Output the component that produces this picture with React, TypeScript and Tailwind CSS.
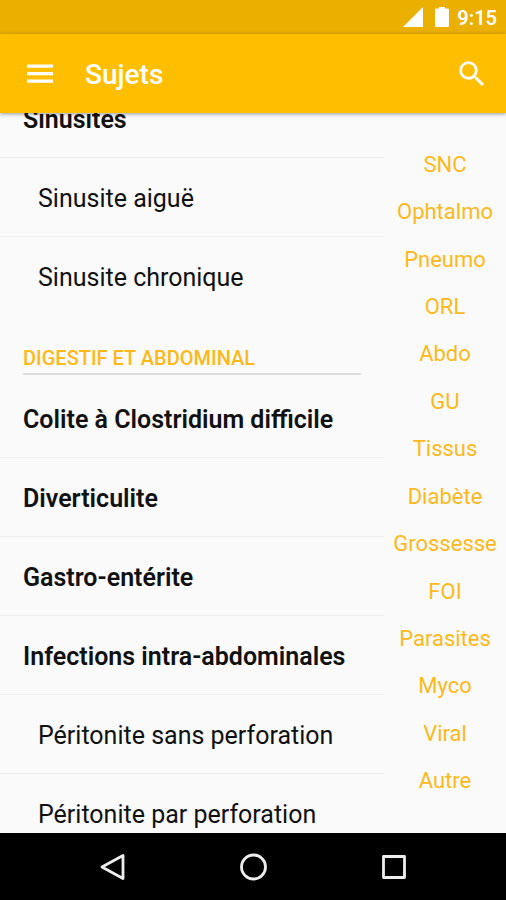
import React from "react";

type Topic = { label: string; child?: boolean; last?: boolean };

const sinusTopics: Topic[] = [
  { label: "Sinusites" },
  { label: "Sinusite aiguë", child: true },
  { label: "Sinusite chronique", child: true, last: true },
];

const digestiveTopics: Topic[] = [
  { label: "Colite à Clostridium difficile" },
  { label: "Diverticulite" },
  { label: "Gastro-entérite" },
  { label: "Infections intra-abdominales" },
  { label: "Péritonite sans perforation", child: true },
  { label: "Péritonite par perforation", child: true },
];

const sections = [
  "SNC", "Ophtalmo", "Pneumo", "ORL", "Abdo", "GU", "Tissus",
  "Diabète", "Grossesse", "FOI", "Parasites", "Myco", "Viral", "Autre",
];

function StatusBar() {
  return (
    <div className="flex h-[34px] shrink-0 items-center justify-end bg-[#ebaf00] pr-[9px] text-white">
      <svg className="h-5 w-5" viewBox="0 0 20 20" fill="currentColor" aria-hidden="true">
        <path d="M20 0v20H0z" />
      </svg>
      <svg className="ml-3 h-5 w-[14px]" viewBox="0 0 14 20" fill="currentColor" aria-hidden="true">
        <path d="M4 0h6v1.5h3a1 1 0 0 1 1 1V19a1 1 0 0 1-1 1H1a1 1 0 0 1-1-1V2.5a1 1 0 0 1 1-1h3z" />
      </svg>
      <span className="ml-2 pt-px text-xl leading-6 font-semibold">9:15</span>
    </div>
  );
}

function AppBar() {
  return (
    <header className="z-10 flex h-[79px] shrink-0 items-center bg-[#ffbf00] px-5 text-white shadow-[0_1px_4px_rgba(0,0,0,0.4)]">
      <button type="button" aria-label="Menu" className="flex h-10 w-10 items-center justify-center">
        <svg className="h-5 w-[26px]" viewBox="0 0 26 20" fill="currentColor">
          <path d="M0 .5h26v3.300H0zM0 8h26v3.300H0zM0 15.5h26v3.300H0z" />
        </svg>
      </button>
      <h1 className="ml-[25px] flex-1 pt-0.5 text-[28px] leading-8 font-medium">Sujets</h1>
      <button type="button" aria-label="Rechercher" className="-mr-1.5 flex h-10 w-10 items-center justify-center">
        <svg className="h-[34px] w-[34px]" viewBox="0 0 24 24" fill="currentColor">
          <path d="M15.5 14h-.79l-.28-.27A6.471 6.471 0 0 0 16 9.5 6.5 6.5 0 1 0 9.5 16c1.61 0 3.09-.59 4.23-1.57l.27.28v.79l5 4.99L20.49 19l-4.99-5zm-6 0C7.01 14 5 11.99 5 9.5S7.01 5 9.5 5 14 7.01 14 9.5 11.99 14 9.5 14z" />
        </svg>
      </button>
    </header>
  );
}

function TopicList({ topics }: { topics: Topic[] }) {
  return (
    <ul>
      {topics.map((t) => (
        <li
          key={t.label}
          className={
            t.last
              ? "h-[79px] border-b border-transparent"
              : "h-[79px] border-b border-[#eeeeee]"
          }
        >
          <a
            href="#"
            className={
              t.child
                ? "flex h-full items-center pt-1 pl-[38px] text-[25px] leading-8 whitespace-nowrap"
                : "flex h-full items-center pt-1 pl-[23px] text-[25px] leading-8 font-semibold whitespace-nowrap"
            }
          >
            {t.label}
          </a>
        </li>
      ))}
    </ul>
  );
}

function NavBar() {
  return (
    <nav className="flex h-[67px] shrink-0 items-center justify-center gap-[101px] bg-black text-[#eeeeee]">
      <button type="button" aria-label="Retour" className="flex h-10 w-10 items-center justify-center">
        <svg className="h-7 w-7" viewBox="0 0 28 28" fill="none" stroke="currentColor" strokeWidth="2.8" strokeLinejoin="round">
          <path d="M25 2.5v23L4 14z" />
        </svg>
      </button>
      <button type="button" aria-label="Accueil" className="flex h-10 w-10 items-center justify-center">
        <svg className="h-7 w-7" viewBox="0 0 28 28" fill="none" stroke="currentColor" strokeWidth="2.8">
          <circle cx="14.5" cy="14" r="12" />
        </svg>
      </button>
      <button type="button" aria-label="Applications récentes" className="flex h-10 w-10 items-center justify-center">
        <svg className="h-7 w-7" viewBox="0 0 28 28" fill="none" stroke="currentColor" strokeWidth="2.8" strokeLinejoin="round">
          <path d="M3.5 3.5h21v21h-21z" />
        </svg>
      </button>
    </nav>
  );
}

export default function App() {
  return (
    <div className="flex h-screen flex-col overflow-hidden bg-[#fafafa] font-['Roboto',sans-serif] text-[#111111]">
      <StatusBar />
      <AppBar />
      <main className="flex min-h-0 flex-1 overflow-hidden">
        <div className="-mt-[34px] min-w-0 flex-1">
          <TopicList topics={sinusTopics} />
          <div className="h-[63px] px-[23px] pt-[30px]">
            <h2 className="border-b-2 border-[#dddddd] pb-[3px] text-[20px] leading-6 font-medium text-[#fdb91a]">
              DIGESTIF ET ABDOMINAL
            </h2>
          </div>
          <TopicList topics={digestiveTopics} />
        </div>
        <aside className="flex w-[122px] shrink-0 flex-col py-7">
          {sections.map((s) => (
            <a
              key={s}
              href="#"
              className="flex flex-1 items-center justify-center text-[22px] leading-7 text-[#fdb91a]"
            >
              {s}
            </a>
          ))}
        </aside>
      </main>
      <NavBar />
    </div>
  );
}
